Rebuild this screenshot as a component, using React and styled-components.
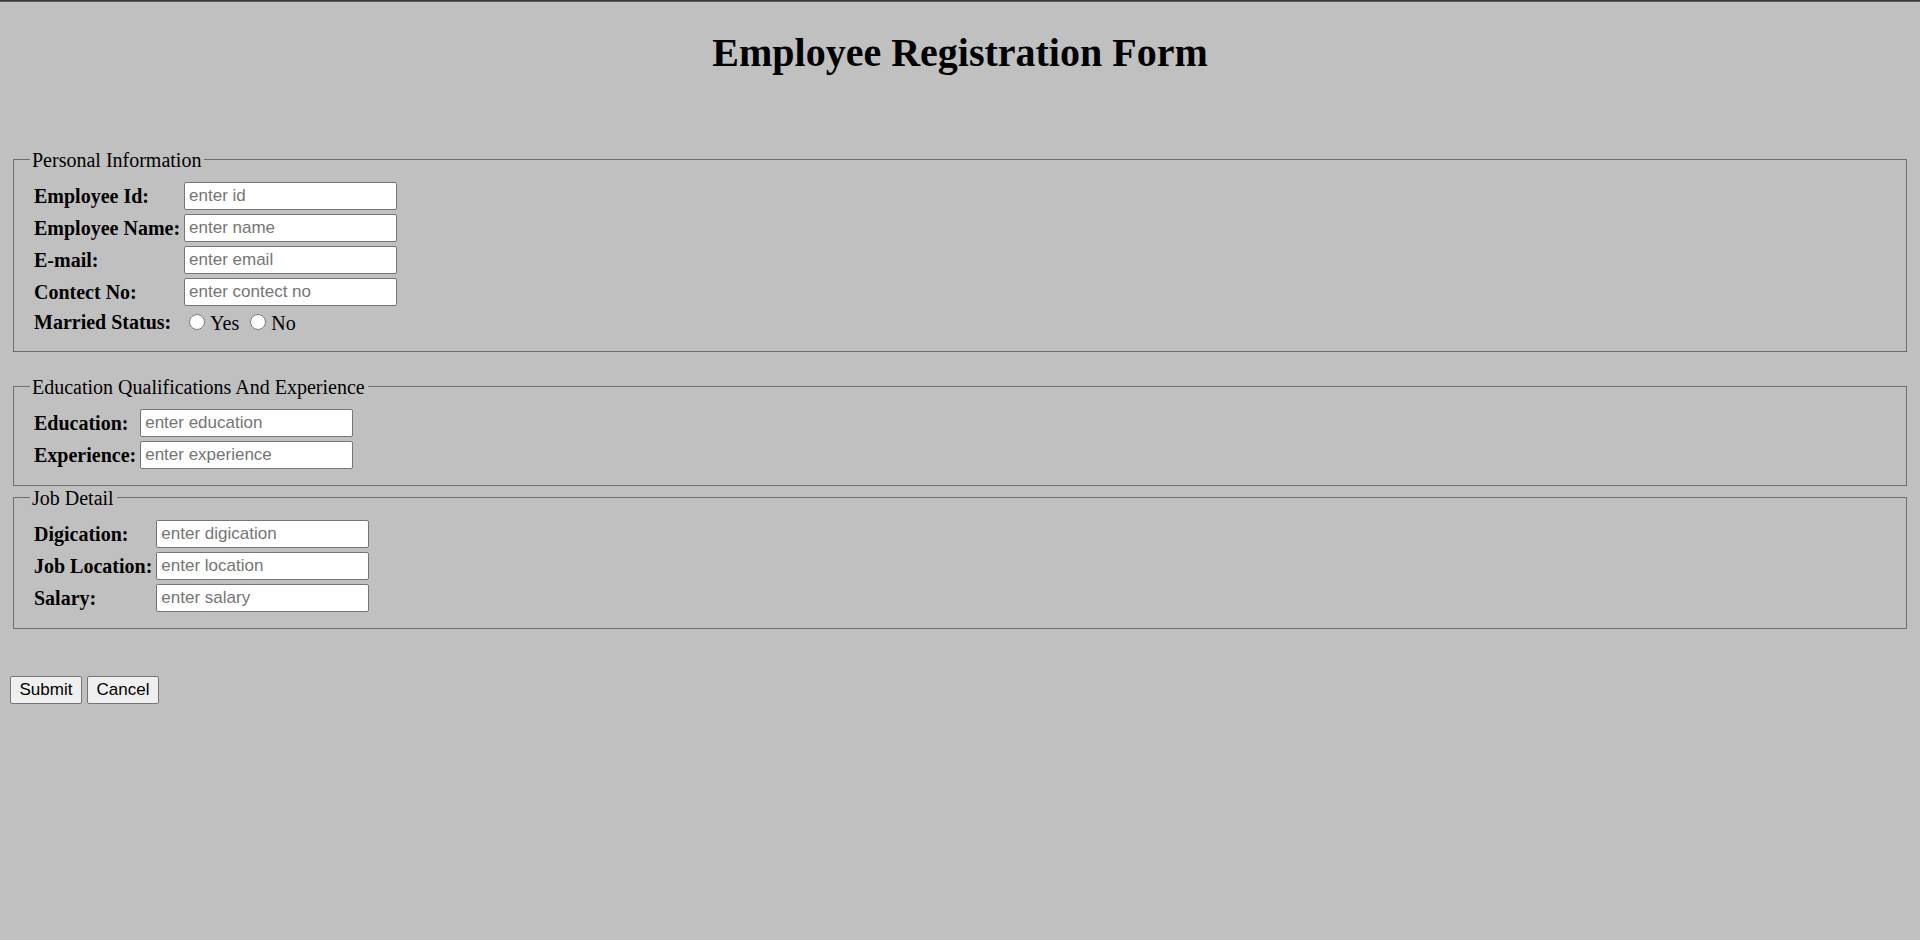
import React from 'react';
import styled, { createGlobalStyle } from 'styled-components';

const GlobalStyle = createGlobalStyle`
  *, *::before, *::after { box-sizing: border-box; }
  body {
    margin: 0;
    background: #c0c0c0;
    color: #000;
    font-family: "Liberation Serif", "Times New Roman", serif;
    font-size: 20px;
    line-height: 23px;
  }
`;

const Page = styled.main`
  min-height: 100vh;
  padding: 29px 10px 10px;
  border-top: 1px solid #383838;
  box-shadow: inset 0 1px #606060;
`;

const Title = styled.h1`
  margin: 0 0 72px;
  font-size: 40px;
  line-height: 46px;
  text-align: center;
`;

const Section = styled.fieldset`
  margin: 0 3px ${({ $gap }) => $gap || 0}px;
  padding: 11px 16px 16px;
  border: 1px solid #6f6f6f;
`;

const SectionTitle = styled.legend`
  padding: 2px 3px 0 2px;
  line-height: 21px;
`;

const Fields = styled.div`
  display: grid;
  grid-template-columns: max-content max-content;
  align-items: center;
  gap: 4px;
  padding-left: 4px;
`;

const Label = styled.label`
  font-weight: bold;
`;

const TextInput = styled.input`
  width: 213px;
  height: 28px;
  padding: 1px 4px;
  border: 1px solid #767676;
  border-radius: 2px;
  background: #fff;
  font-family: "Liberation Sans", Arial, sans-serif;
  font-size: 17px;

  &::placeholder { color: #757575; }
`;

const RadioGroup = styled.div`
  display: flex;
  gap: 5px;
  height: 25px;
  padding-left: 5px;
`;

const RadioOption = styled.label`
  display: flex;
  align-items: flex-end;
  gap: 5px;
  margin-right: 6px;
`;

const Radio = styled.input`
  width: 16px;
  height: 16px;
  margin: 0 0 5px;
`;

const Actions = styled.div`
  display: flex;
  gap: 5px;
  margin-top: 47px;
`;

const Button = styled.button`
  width: 72px;
  height: 28px;
  padding: 0;
  border: 1px solid #767676;
  border-radius: 2px;
  background: #efefef;
  color: #000;
  font-family: "Liberation Sans", Arial, sans-serif;
  font-size: 17px;
`;

function Field({ id, label, placeholder, type = 'text' }) {
  return (
    <>
      <Label htmlFor={id}>{label}</Label>
      <TextInput id={id} name={id} type={type} placeholder={placeholder} />
    </>
  );
}

export default function App() {
  return (
    <Page>
      <GlobalStyle />
      <Title>Employee Registration Form</Title>
      <form onSubmit={(e) => e.preventDefault()}>
        <Section $gap={23}>
          <SectionTitle>Personal Information</SectionTitle>
          <Fields>
            <Field id="employee-id" label="Employee Id:" placeholder="enter id" />
            <Field id="employee-name" label="Employee Name:" placeholder="enter name" />
            <Field id="email" label="E-mail:" placeholder="enter email" type="email" />
            <Field id="contact" label="Contect No:" placeholder="enter contect no" />
            <Label as="span" id="married">Married Status:</Label>
            <RadioGroup role="radiogroup" aria-labelledby="married">
              <RadioOption><Radio type="radio" name="married" value="yes" />Yes</RadioOption>
              <RadioOption><Radio type="radio" name="married" value="no" />No</RadioOption>
            </RadioGroup>
          </Fields>
        </Section>
        <Section>
          <SectionTitle>Education Qualifications And Experience</SectionTitle>
          <Fields>
            <Field id="education" label="Education:" placeholder="enter education" />
            <Field id="experience" label="Experience:" placeholder="enter experience" />
          </Fields>
        </Section>
        <Section>
          <SectionTitle>Job Detail</SectionTitle>
          <Fields>
            <Field id="digication" label="Digication:" placeholder="enter digication" />
            <Field id="location" label="Job Location:" placeholder="enter location" />
            <Field id="salary" label="Salary:" placeholder="enter salary" />
          </Fields>
        </Section>
        <Actions>
          <Button type="submit">Submit</Button>
          <Button type="reset">Cancel</Button>
        </Actions>
      </form>
    </Page>
  );
}
